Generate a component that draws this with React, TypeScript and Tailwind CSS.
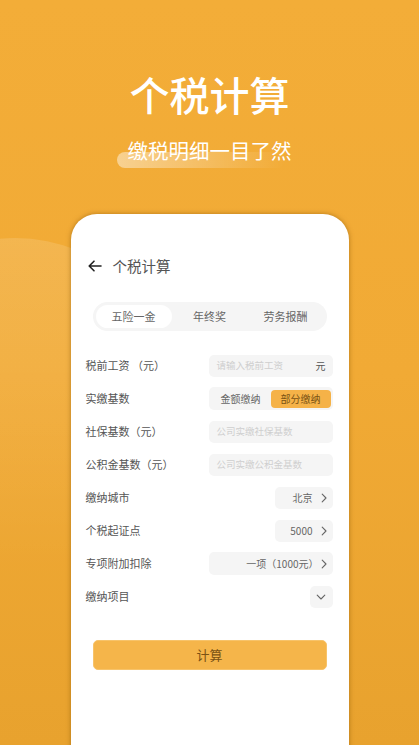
import React, { useState } from "react";

const FONT = { fontFamily: '"Noto Sans CJK SC", "Noto Sans", sans-serif' };

function Chevron({ down = false }: { down?: boolean }) {
  return (
    <svg width="10" height="10" viewBox="0 0 10 10" className={down ? "rotate-90" : ""}>
      <path d="M3.2 1.2 L7 5 L3.2 8.8" fill="none" stroke="#666" strokeWidth="1.1" strokeLinecap="round" strokeLinejoin="round" />
    </svg>
  );
}

function Row({ label, children }: { label: string; children: React.ReactNode }) {
  return (
    <div className="flex items-center justify-between h-[22px]">
      <span className="text-[11px] text-[#555]">{label}</span>
      {children}
    </div>
  );
}

function Field({ placeholder, unit }: { placeholder: string; unit?: string }) {
  return (
    <div className="w-[124px] h-[22px] rounded-[5px] bg-[#f5f5f5] flex items-center justify-between pl-2 pr-[7px]">
      <span className="text-[9.5px] text-[#cfcfcf]">{placeholder}</span>
      {unit && <span className="text-[10px] text-[#555]">{unit}</span>}
    </div>
  );
}

export default function App() {
  const [tab, setTab] = useState(0);
  const [mode, setMode] = useState(1);
  const tabs = ["五险一金", "年终奖", "劳务报酬"];

  return (
    <div className="relative w-[419px] h-[745px] overflow-hidden bg-gradient-to-b from-[#f3ad38] via-[#f1aa35] to-[#e8a22e]" style={FONT}>
      {/* soft light blob on the left */}
      <div className="absolute left-[-150px] top-[238px] w-[330px] h-[330px] rounded-full bg-gradient-to-b from-[rgba(255,255,255,0.13)] to-[rgba(255,255,255,0)]" />

      <div className="relative flex flex-col items-center pt-[74px]">
        <h1 className="text-[40px] leading-none font-medium text-white">个税计算</h1>
        <div className="relative mt-[26px]">
          <div className="absolute left-[-11px] top-[12px] w-[168px] h-[16px] rounded-full bg-gradient-to-r from-[rgba(255,255,255,0.45)] to-[rgba(255,255,255,0)]" />
          <p className="relative text-[20.5px] leading-none text-white">缴税明细一目了然</p>
        </div>
      </div>

      <div className="relative mx-auto mt-[53px] w-[278px] h-[540px] pt-[41px] bg-white rounded-t-[26px] shadow-[0_0_5px_rgba(130,80,0,0.55)]">
        <div className="flex items-center h-[22px] pl-[17px]">
          <svg width="14" height="12" viewBox="0 0 14 12">
            <path d="M13 6 H1.5 M6 1.2 L1.2 6 L6 10.8" fill="none" stroke="#222" strokeWidth="1.6" strokeLinecap="round" strokeLinejoin="round" />
          </svg>
          <span className="ml-[11px] text-[14.5px] text-[#555]">个税计算</span>
        </div>

        <div className="mx-[22px] mt-[25px] h-[29px] rounded-full bg-[#f5f5f5] flex items-center px-[3px]">
          {tabs.map((t, i) => (
            <button
              key={t}
              onClick={() => setTab(i)}
              className={`flex-1 h-[23px] rounded-full text-[11px] text-[#666] ${tab === i ? "bg-white" : ""}`}
            >
              {t}
            </button>
          ))}
        </div>

        <div className="flex flex-col gap-[11px] pl-[15px] pr-[16px] mt-[24px]">
          <Row label="税前工资 （元）">
            <Field placeholder="请输入税前工资" unit="元" />
          </Row>
          <Row label="实缴基数">
            <div className="w-[124px] h-[23px] rounded-[5px] bg-[#f5f5f5] flex items-center p-[2px]">
              {["金额缴纳", "部分缴纳"].map((m, i) => (
                <button
                  key={m}
                  onClick={() => setMode(i)}
                  className={`flex-1 h-[18px] rounded-[4px] text-[10px] ${mode === i ? "bg-[#f5b248] text-[#7a5214]" : "text-[#666]"}`}
                >
                  {m}
                </button>
              ))}
            </div>
          </Row>
          <Row label="社保基数（元）">
            <Field placeholder="公司实缴社保基数" />
          </Row>
          <Row label="公积金基数（元）">
            <Field placeholder="公司实缴公积金基数" />
          </Row>
          <Row label="缴纳城市">
            <div className="w-[58px] h-[22px] rounded-[5px] bg-[#f5f5f5] flex items-center justify-end gap-[6px] pr-[4px]">
              <span className="text-[10px] text-[#666]">北京</span>
              <Chevron />
            </div>
          </Row>
          <Row label="个税起证点">
            <div className="w-[58px] h-[22px] rounded-[5px] bg-[#f5f5f5] flex items-center justify-end gap-[6px] pr-[4px]">
              <span className="text-[10px] text-[#666]">5000</span>
              <Chevron />
            </div>
          </Row>
          <Row label="专项附加扣除">
            <div className="w-[124px] h-[23px] rounded-[5px] bg-[#f5f5f5] flex items-center justify-end gap-0 pr-[4px]">
              <span className="text-[10px] text-[#666]">一项（1000元）</span>
              <Chevron />
            </div>
          </Row>
          <Row label="缴纳项目">
            <div className="w-[23px] h-[22px] rounded-[5px] bg-[#f5f5f5] flex items-center justify-center">
              <Chevron down />
            </div>
          </Row>
        </div>

        <div className="mx-[22px] mt-[32px] h-[30px] rounded-[5px] bg-[#f5b54a] border border-[#f7c36a] flex items-center justify-center">
          <span className="text-[13px] text-[#7a5214]">计算</span>
        </div>
      </div>
    </div>
  );
}
